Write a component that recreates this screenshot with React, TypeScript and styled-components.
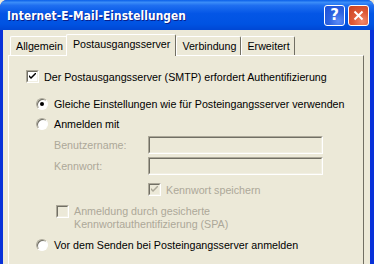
import React from "react";
import styled, { createGlobalStyle } from "styled-components";

const Global = createGlobalStyle`
  html, body { margin: 0; padding: 0; background: #ECE9D8; }
  body { font-family: "Liberation Sans", Arial, sans-serif; font-size: 10.7px; }
  #root { width: 374px; height: 264px; overflow: hidden; }
`;

const Window = styled.div`
  width: 374px;
  height: 264px;
  display: flex;
  flex-direction: column;
  background: #0831D9;
  border-radius: 7px 7px 0 0;
  overflow: hidden;
`;

const TitleBar = styled.div`
  height: 30px;
  flex: none;
  display: flex;
  align-items: center;
  padding: 0 5px 0 7px;
  background: linear-gradient(
    to bottom,
    #0A5FE8 0%,
    #3B8DF8 8%,
    #1F6FF0 18%,
    #0456E6 45%,
    #0053E2 80%,
    #0047D4 100%
  );
`;

const Title = styled.div`
  flex: 1;
  color: #fff;
  font-family: "DejaVu Sans Condensed", "DejaVu Sans", sans-serif;
  font-weight: bold;
  font-size: 11.8px;
  letter-spacing: 0.1px;
  text-shadow: 1px 1px 0 #0A1F8A;
  padding-top: 1px;
`;

const CaptionButton = styled.div<{ $kind: "help" | "close" }>`
  width: 21px;
  height: 21px;
  box-sizing: border-box;
  border: 1px solid #fff;
  border-radius: 3px;
  margin-left: 3px;
  display: flex;
  align-items: center;
  justify-content: center;
  color: #fff;
  font-family: "DejaVu Sans", sans-serif;
  font-weight: bold;
  font-size: 15px;
  background: ${(p) =>
    p.$kind === "help"
      ? "radial-gradient(circle at 70% 80%, #5C8CF8 0%, #2D63E0 45%, #1A4FD8 100%)"
      : "radial-gradient(circle at 70% 80%, #F08A6C 0%, #DE5A38 45%, #C8401F 100%)"};
`;

const Frame = styled.div`
  flex: 1;
  display: flex;
  margin: 0 4px 0 3px;
  background: #ECE9D8;
  padding: 3px 6px 0 5px;
  flex-direction: column;
  min-height: 0;
`;

const TabRow = styled.div`
  display: flex;
  align-items: flex-end;
  height: 22px;
  padding-left: 2px;
  position: relative;
  z-index: 1;
`;

const Tab = styled.div<{ $active?: boolean }>`
  box-sizing: border-box;
  height: ${(p) => (p.$active ? "22px" : "19px")};
  padding: ${(p) => (p.$active ? "0 5px 3px 6px" : "0 4px 0 5px")};
  margin: ${(p) => (p.$active ? "0 0 -1px -2px" : "0")};
  display: flex;
  align-items: center;
  border-top: 1px solid #fff;
  border-left: 1px solid #fff;
  border-right: 1px solid #716F64;
  border-radius: 2px 2px 0 0;
  background: #ECE9D8;
  color: #000;
  white-space: nowrap;
  ${(p) => (p.$active ? "z-index: 2;" : "")}
`;

const Panel = styled.div`
  flex: 1;
  border-top: 1px solid #fff;
  border-left: 1px solid #fff;
  border-right: 1px solid #716F64;
  padding: 14px 0 0 17px;
  display: flex;
  flex-direction: column;
`;

const Row = styled.label<{ $indent?: number; $gap?: number; $disabled?: boolean }>`
  display: flex;
  align-items: center;
  margin-left: ${(p) => p.$indent ?? 0}px;
  margin-top: ${(p) => p.$gap ?? 0}px;
  height: 13px;
  color: ${(p) => (p.$disabled ? "#ACA899" : "#000")};
  white-space: nowrap;
`;

const Box = styled.span<{ $disabled?: boolean }>`
  width: 13px;
  height: 13px;
  box-sizing: border-box;
  flex: none;
  border-top: 1px solid #ACA899;
  border-left: 1px solid #ACA899;
  border-right: 1px solid #fff;
  border-bottom: 1px solid #fff;
  margin-right: 5px;
  position: relative;
  display: inline-flex;
  &::before {
    content: "";
    position: absolute;
    inset: 0;
    border-top: 1px solid #716F64;
    border-left: 1px solid #716F64;
    border-right: 1px solid #F1EFE2;
    border-bottom: 1px solid #F1EFE2;
    background: ${(p) => (p.$disabled ? "#ECE9D8" : "#fff")};
  }
  svg {
    position: absolute;
    left: 2px;
    top: 2px;
    z-index: 1;
  }
`;

const Radio = styled.span`
  width: 12px;
  height: 12px;
  flex: none;
  border-radius: 50%;
  box-sizing: border-box;
  margin-right: 6px;
  background: #fff;
  border: 1px solid;
  border-color: #ACA899 #fff #fff #ACA899;
  box-shadow: inset 1px 1px 0 #716F64;
  display: inline-flex;
  align-items: center;
  justify-content: center;
`;

const Dot = styled.span`
  width: 4px;
  height: 4px;
  border-radius: 50%;
  background: #000;
`;

const FieldRow = styled.div<{ $gap: number }>`
  display: flex;
  align-items: center;
  margin-left: 28px;
  margin-top: ${(p) => p.$gap}px;
  height: 18px;
  color: #ACA899;
`;

const FieldLabel = styled.span`
  width: 94px;
`;

const Input = styled.div`
  width: 175px;
  height: 18px;
  box-sizing: border-box;
  border-top: 1px solid #ACA899;
  border-left: 1px solid #ACA899;
  border-right: 1px solid #fff;
  border-bottom: 1px solid #fff;
  position: relative;
  &::before {
    content: "";
    position: absolute;
    inset: 0;
    border-top: 1px solid #716F64;
    border-left: 1px solid #716F64;
    border-right: 1px solid #F1EFE2;
    border-bottom: 1px solid #F1EFE2;
  }
`;

const TwoLine = styled.div`
  display: flex;
  align-items: flex-start;
  margin-left: 30px;
  margin-top: 9px;
  color: #ACA899;
  line-height: 13px;
`;

const Check = ({ color }: { color: string }) => (
  <svg width="7" height="7" viewBox="0 0 7 7">
    <path d="M0 2 L0 4 L2 6 L7 1 L7 -1 L2 4 Z" fill={color} />
  </svg>
);

export default function App() {
  return (
    <>
      <Global />
      <Window>
        <TitleBar>
          <Title>Internet-E-Mail-Einstellungen</Title>
          <CaptionButton $kind="help">?</CaptionButton>
          <CaptionButton $kind="close">
            <svg width="11" height="11" viewBox="0 0 11 11">
              <path d="M1.5 1.5 L9.5 9.5 M9.5 1.5 L1.5 9.5" stroke="#fff" strokeWidth="2" />
            </svg>
          </CaptionButton>
        </TitleBar>
        <Frame>
          <TabRow>
            <Tab>Allgemein</Tab>
            <Tab $active>Postausgangsserver</Tab>
            <Tab>Verbindung</Tab>
            <Tab>Erweitert</Tab>
          </TabRow>
          <Panel>
            <Row>
              <Box>
                <Check color="#000" />
              </Box>
              Der Postausgangsserver (SMTP) erfordert Authentifizierung
            </Row>
            <Row $indent={10} $gap={14}>
              <Radio>
                <Dot />
              </Radio>
              Gleiche Einstellungen wie für Posteingangsserver verwenden
            </Row>
            <Row $indent={10} $gap={7}>
              <Radio />
              Anmelden mit
            </Row>
            <FieldRow $gap={6}>
              <FieldLabel>Benutzername:</FieldLabel>
              <Input />
            </FieldRow>
            <FieldRow $gap={3}>
              <FieldLabel>Kennwort:</FieldLabel>
              <Input />
            </FieldRow>
            <Row $indent={122} $gap={8} $disabled>
              <Box $disabled>
                <Check color="#ACA899" />
              </Box>
              Kennwort speichern
            </Row>
            <TwoLine>
              <Box $disabled />
              <span>
                Anmeldung durch gesicherte
                <br />
                Kennwortauthentifizierung (SPA)
              </span>
            </TwoLine>
            <Row $indent={10} $gap={7}>
              <Radio />
              Vor dem Senden bei Posteingangsserver anmelden
            </Row>
          </Panel>
        </Frame>
      </Window>
    </>
  );
}
